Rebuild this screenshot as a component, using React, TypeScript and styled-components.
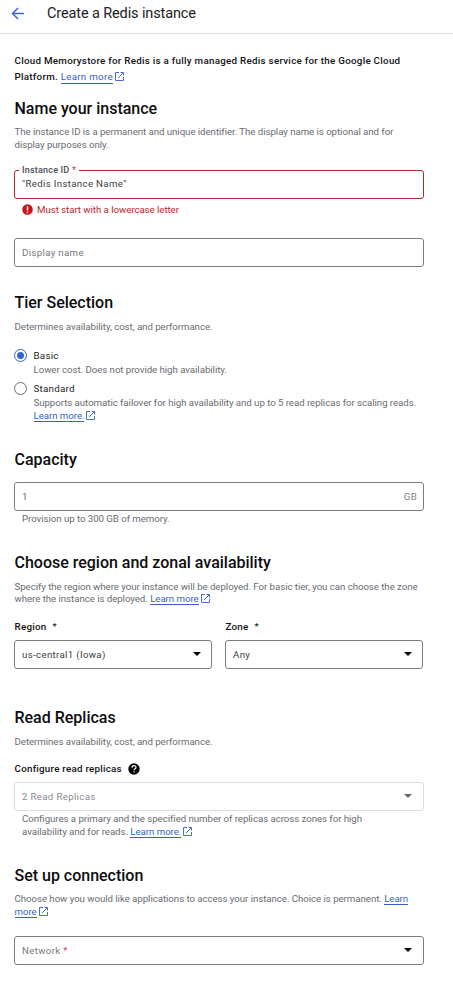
import React from "react";
import styled, { createGlobalStyle } from "styled-components";

const GlobalStyle = createGlobalStyle`
  * { box-sizing: border-box; }
  body { margin: 0; background: #fff; font-family: Roboto, "Liberation Sans", sans-serif; color: #17181a; }
`;

const Page = styled.main`
  width: 453px;
  height: 991px;
  overflow: hidden;
  background: #fff;
`;

const Header = styled.header`
  display: flex;
  height: 34px;
  padding: 0 0 6px 11px;
  align-items: center;
  border-bottom: 1px solid #dcdde0;
`;

const BackButton = styled.a`
  display: flex;
  width: 36px;
`;

const Title = styled.h1`
  margin: 0;
  font-size: 14.5px;
  font-weight: 400;
  line-height: 19px;
  letter-spacing: -0.12px;
  color: #202124;
`;

const Content = styled.div`
  display: flex;
  flex-direction: column;
  width: 424px;
  padding: 19px 0 0 14px;
`;

const Intro = styled.p`
  margin: 0 0 0 0.5px;
  font-size: 9.8px;
  font-weight: 500;
  line-height: 16px;
  letter-spacing: 0.27px;
  white-space: nowrap;
  color: #111214;
`;

const Section = styled.section<{ $top: number }>`
  display: flex;
  flex-direction: column;
  margin-top: ${(p) => p.$top}px;
`;

const Heading = styled.h2`
  margin: 0 0 0 0.5px;
  font-size: 16px;
  font-weight: 500;
  line-height: 20px;
  letter-spacing: -0.01px;
  color: #0c0d0e;
`;

const Description = styled.p<{ $top?: number; $indent?: number; $line?: number }>`
  margin: ${(p) => p.$top ?? 0}px 0 0 ${(p) => p.$indent ?? 0.5}px;
  font-size: 9.7px;
  line-height: ${(p) => p.$line ?? 13}px;
  letter-spacing: -0.053px;
  white-space: nowrap;
  color: #696c71;
`;

const Link = styled.a<{ $drop?: number }>`
  font-weight: 400;
  color: #3a5fc8;
  border-bottom: 1px solid #3a5fc8;
  padding-bottom: ${(p) => p.$drop ?? 0}px;
`;

const LinkIcon = styled.svg`
  width: 9px;
  height: 9px;
  margin-left: 2px;
  vertical-align: -1px;
`;

const Field = styled.div<{ $top: number; $tone?: "error" | "disabled"; $end?: number }>`
  position: relative;
  display: flex;
  height: 29px;
  margin-top: ${(p) => p.$top}px;
  padding: 0 ${(p) => p.$end ?? 6}px 0 7px;
  align-items: center;
  justify-content: space-between;
  border: 1px solid
    ${(p) => (p.$tone === "error" ? "#b3262a" : p.$tone === "disabled" ? "#dcdcde" : "#7b7d81")};
  border-radius: 3px;
`;

const FloatingLabel = styled.label`
  position: absolute;
  top: -7px;
  left: 4px;
  padding: 0 3px;
  background: #fff;
  font-size: 9px;
  font-weight: 500;
  line-height: 12px;
  letter-spacing: 0.2px;
  color: #4b4e53;
`;

const FieldText = styled.span<{ $color?: string; $lift?: number }>`
  margin-bottom: ${(p) => p.$lift ?? 0}px;
  font-size: 9.7px;
  line-height: 13px;
  letter-spacing: 0.33px;
  color: ${(p) => p.$color ?? "#3c4043"};
`;

const Required = styled.span`
  color: #d0464a;
`;

const Caret = styled.span<{ $color?: string }>`
  width: 0;
  height: 0;
  margin: 0 4px 1px 0;
  border: 4px solid transparent;
  border-top-color: ${(p) => p.$color ?? "#000"};
  border-bottom: 0;
`;

const ErrorRow = styled.div`
  display: flex;
  height: 13px;
  margin: 4px 0 0 8px;
  gap: 4px;
  align-items: center;
  font-size: 9.7px;
  line-height: 13px;
  letter-spacing: -0.053px;
  color: #b8272c;
`;

const RadioRow = styled.div<{ $top: number }>`
  display: flex;
  margin-top: ${(p) => p.$top}px;
  gap: 6px;
`;

const Radio = styled.span<{ $checked?: boolean }>`
  display: flex;
  width: 13px;
  height: 13px;
  align-items: center;
  justify-content: center;
  border: 1px solid ${(p) => (p.$checked ? "#3565d0" : "#6b6e73")};
  border-radius: 50%;

  &::after {
    content: "";
    width: 7px;
    height: 7px;
    border-radius: 50%;
    background: ${(p) => (p.$checked ? "#3565d0" : "transparent")};
  }
`;

const RadioLabel = styled.div`
  margin-left: 0.5px;
  font-size: 9.8px;
  line-height: 13px;
  letter-spacing: 0.24px;
  color: #1d1e20;
`;

const Columns = styled.div`
  display: grid;
  grid-template-columns: 198px 198px;
  column-gap: 13px;
  margin-top: 15px;
`;

const Label = styled.div<{ $top?: number }>`
  display: flex;
  height: 13px;
  margin: ${(p) => p.$top ?? 0}px 0 0 0.5px;
  align-items: center;
  gap: 6px;
  font-size: 9.8px;
  font-weight: 500;
  line-height: 13px;
  letter-spacing: 0.24px;
  color: #111214;
`;

const Asterisk = styled.span`
  font-weight: 400;
`;

const ExternalLink = () => (
  <LinkIcon viewBox="0 0 9 9" fill="none" stroke="#4a6fce" strokeWidth="1">
    <path d="M4 .5H.5v8h8V5M5.5.5h3v3M8.5.5 3 6" />
  </LinkIcon>
);

export default function App() {
  return (
    <Page>
      <GlobalStyle />
      <Header>
        <BackButton>
          <svg width="14" height="13" viewBox="0 0 14 13" fill="none" stroke="#3f66cc" strokeWidth="1.5">
            <path d="M13 6.5H1.5M7 1 1.5 6.5 7 12" />
          </svg>
        </BackButton>
        <Title>Create a Redis instance</Title>
      </Header>
      <Content>
        <Intro>
          Cloud Memorystore for Redis is a fully managed Redis service for the Google Cloud
          <br />
          Platform. <Link $drop={1}>Learn more</Link>
          <ExternalLink />
        </Intro>

        <Section $top={14}>
          <Heading>Name your instance</Heading>
          <Description $top={6}>
            The instance ID is a permanent and unique identifier. The display name is optional and for
            <br />
            display purposes only.
          </Description>
          <Field $top={19} $tone="error">
            <FloatingLabel>
              Instance ID <Required>*</Required>
            </FloatingLabel>
            <FieldText $lift={2}>"Redis Instance Name"</FieldText>
          </Field>
          <ErrorRow>
            <svg width="11" height="11" viewBox="0 0 11 11">
              <circle cx="5.5" cy="5.5" r="5.3" fill="#c5161d" />
              <path d="M5.5 2.3v4M5.5 7.4v1.4" stroke="#fff" strokeWidth="1.4" />
            </svg>
            Must start with a lowercase letter
          </ErrorRow>
          <Field $top={22}>
            <FieldText $color="#75787d">Display name</FieldText>
          </Field>
        </Section>

        <Section $top={26}>
          <Heading>Tier Selection</Heading>
          <Description $top={7}>Determines availability, cost, and performance.</Description>
          <RadioRow $top={16}>
            <Radio $checked />
            <div>
              <RadioLabel>Basic</RadioLabel>
              <Description $top={1}>Lower cost. Does not provide high availability.</Description>
            </div>
          </RadioRow>
          <RadioRow $top={6}>
            <Radio />
            <div>
              <RadioLabel>Standard</RadioLabel>
              <Description $top={1}>
                Supports automatic failover for high availability and up to 5 read replicas for scaling reads.
                <br />
                <Link>Learn more.</Link>
                <ExternalLink />
              </Description>
            </div>
          </RadioRow>
        </Section>

        <Section $top={28}>
          <Heading>Capacity</Heading>
          <Field $top={12}>
            <FieldText $color="#66696e">1</FieldText>
            <FieldText $color="#808388">GB</FieldText>
          </Field>
          <Description $top={1} $indent={8}>Provision up to 300 GB of memory.</Description>
        </Section>

        <Section $top={28}>
          <Heading>Choose region and zonal availability</Heading>
          <Description $top={8} $line={12}>
            Specify the region where your instance will be deployed. For basic tier, you can choose the zone
            <br />
            where the instance is deployed. <Link>Learn more</Link>
            <ExternalLink />
          </Description>
          <Columns>
            <div>
              <Label>Region <Asterisk>*</Asterisk></Label>
              <Field $top={7}>
                <FieldText>us-central1 (Iowa)</FieldText>
                <Caret />
              </Field>
            </div>
            <div>
              <Label>Zone <Asterisk>*</Asterisk></Label>
              <Field $top={7}>
                <FieldText>Any</FieldText>
                <Caret />
              </Field>
            </div>
          </Columns>
        </Section>

        <Section $top={39}>
          <Heading>Read Replicas</Heading>
          <Description $top={7}>Determines availability, cost, and performance.</Description>
          <Label $top={14}>
            Configure read replicas
            <svg width="12" height="12" viewBox="0 0 12 12" fill="none">
              <circle cx="6" cy="6" r="5.7" fill="#000" />
              <path d="M4 4.7c0-2.7 4-2.6 4-.2C8 5.9 6 5.8 6 7.3M6 8.2v1.4" stroke="#fff" strokeWidth="1.2" />
            </svg>
          </Label>
          <Field $top={7} $tone="disabled" $end={7}>
            <FieldText $color="#8a8c90">2 Read Replicas</FieldText>
            <Caret $color="#66686b" />
          </Field>
          <Description $top={1} $indent={8}>
            Configures a primary and the specified number of replicas across zones for high
            <br />
            availability and for reads. <Link>Learn more.</Link>
            <ExternalLink />
          </Description>
        </Section>

        <Section $top={28}>
          <Heading>Set up connection</Heading>
          <Description $top={6}>
            Choose how you would like applications to access your instance. Choice is permanent. <Link>Learn</Link>
            <br />
            <Link>more</Link>
            <ExternalLink />
          </Description>
          <Field $top={18} $end={7}>
            <FieldText $color="#75787d">
              Network <Required>*</Required>
            </FieldText>
            <Caret />
          </Field>
        </Section>
      </Content>
    </Page>
  );
}
